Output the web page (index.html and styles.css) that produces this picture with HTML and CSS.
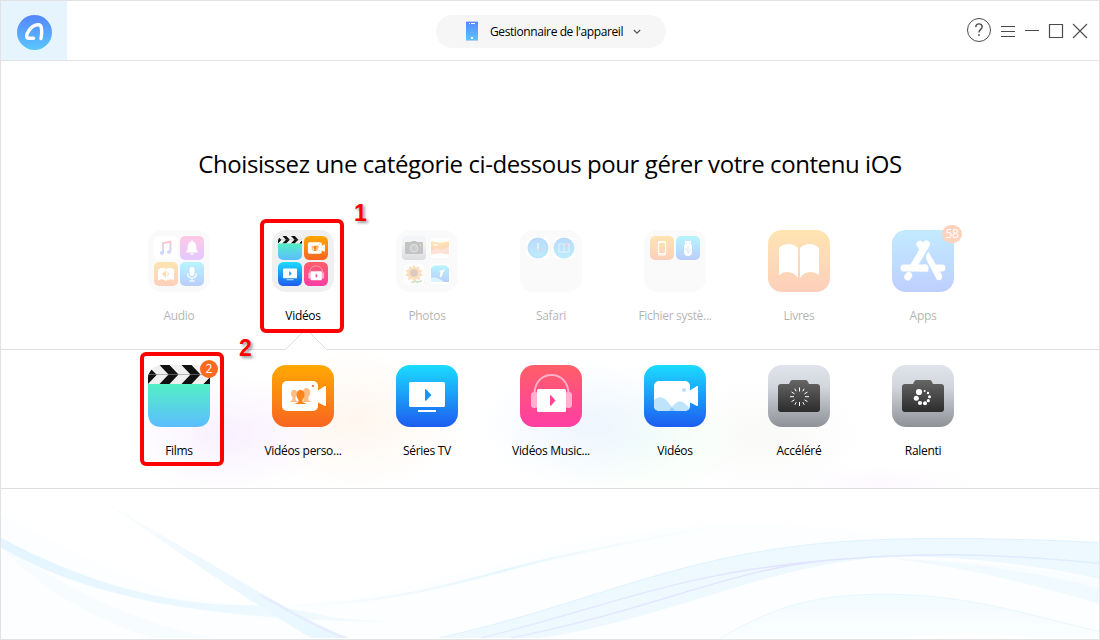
FILE: index.html
```html
<!DOCTYPE html>
<html lang="fr">
<head>
<meta charset="utf-8">
<title>Gestionnaire de l'appareil</title>
<link rel="stylesheet" href="styles.css">
</head>
<body>
<svg class="sprite" aria-hidden="true">
  <defs>
    <linearGradient id="g-orange" x1="0" y1="0" x2="0" y2="1"><stop offset="0" stop-color="#ffa903"/><stop offset="1" stop-color="#f96421"/></linearGradient>
    <linearGradient id="g-blue" x1="0" y1="0" x2="0" y2="1"><stop offset="0" stop-color="#1bdcff"/><stop offset="1" stop-color="#1d5cf0"/></linearGradient>
    <linearGradient id="g-pink" x1="0" y1="0" x2="0" y2="1"><stop offset="0" stop-color="#ff5f67"/><stop offset="1" stop-color="#fe3ea5"/></linearGradient>
    <linearGradient id="g-film" x1="0" y1="0" x2="0" y2="1"><stop offset="0" stop-color="#53efc4"/><stop offset="1" stop-color="#5cbdff"/></linearGradient>
    <linearGradient id="g-gray" x1="0" y1="0" x2="0" y2="1"><stop offset="0" stop-color="#dfe3eb"/><stop offset="0.35" stop-color="#d3d7dd"/><stop offset="1" stop-color="#8e9196"/></linearGradient>
    <linearGradient id="g-dark" x1="0" y1="0" x2="0" y2="1"><stop offset="0" stop-color="#666"/><stop offset="1" stop-color="#2c2c2c"/></linearGradient>
    <linearGradient id="g-bell" x1="0" y1="0" x2="0" y2="1"><stop offset="0" stop-color="#ff4fae"/><stop offset="1" stop-color="#a54cff"/></linearGradient>
    <linearGradient id="g-apps" x1="0" y1="0" x2="0" y2="1"><stop offset="0" stop-color="#38bdff"/><stop offset="1" stop-color="#2b62ff"/></linearGradient>
    <linearGradient id="g-note" x1="0" y1="0" x2="0" y2="1"><stop offset="0" stop-color="#ff3b5c"/><stop offset="1" stop-color="#3f7dff"/></linearGradient>
    <linearGradient id="g-logo" x1="0" y1="0" x2="0" y2="1"><stop offset="0" stop-color="#5585ff"/><stop offset="1" stop-color="#5bc6ff"/></linearGradient>
    <linearGradient id="g-compass" x1="0" y1="0" x2="0" y2="1"><stop offset="0" stop-color="#2586ee"/><stop offset="1" stop-color="#27c4f5"/></linearGradient>
    <clipPath id="c-tile"><rect width="62" height="62" rx="14"/></clipPath>
    <clipPath id="c-video"><rect x="10" y="16" width="36" height="30" rx="5"/></clipPath>
  </defs>

  <symbol id="i-film" viewBox="0 0 62 62"><path fill="url(#g-film)" d="M0 19h62v29q0 14-14 14H14Q0 62 0 48z"/><g clip-path="url(#c-tile)">
    <path fill="#f0f0f0" d="M0 0h62v19H0z"/>
    <path fill="#111" d="M-11 0H-1L8.500 9.500L-1 19H-11L-2 9.500zM11.500 0h10l9 9.500l-9 9.500h-10l9-9.500zM33.500 0h10l9 9.500l-9 9.500h-10l9-9.500zM55.500 0h10v19h-10l9-9.500z"/>
    <path fill="#111" d="M0 10v9l9-9.500zM62 13v6h-6z"/>
    <path stroke="#888" stroke-width=".6" d="M0 9.500h62"/></g></symbol>

  <symbol id="i-perso" viewBox="0 0 62 62"><rect width="62" height="62" rx="14" fill="url(#g-orange)"/>
    <rect x="10" y="16" width="36" height="30" rx="5" fill="#fff"/><path fill="#fff" d="M45 26l8-5h1v20h-1l-8-4z"/>
    <circle cx="41" cy="21" r="1.100" fill="#f4603c"/>
    <g fill="#ffbd83"><ellipse cx="22" cy="28.500" rx="3" ry="3.800"/><path d="M20.500 30h3v5l3 2h-9l3-2z"/><ellipse cx="34.500" cy="27.500" rx="3.600" ry="4.500"/><path d="M32.500 30h4v5.500l3.500 1.500H31z"/></g>
    <ellipse cx="28.500" cy="30" rx="4" ry="5.200" fill="#fb851b"/><path fill="#fb851b" d="M26.500 33h4v4l4 2H22.500l4-2z"/></symbol>

  <symbol id="i-tv" viewBox="0 0 62 62"><rect width="62" height="62" rx="14" fill="url(#g-blue)"/>
    <rect x="13" y="17" width="36" height="25" rx="1.500" fill="#fff"/><path fill="#1d93f7" d="M29 24.500l1-.3 5.500 5.800-5.500 5.800-1-.3z"/><path fill="#fff" d="M22 45h18v2H22z"/></symbol>

  <symbol id="i-music" viewBox="0 0 62 62"><rect width="62" height="62" rx="14" fill="url(#g-pink)"/>
    <path d="M14.500 28C15 17 22 10 31.500 10S48 17 48.500 28" fill="none" stroke="#ffb1c8" stroke-width="2"/>
    <rect x="11" y="27" width="7" height="16" rx="3" fill="#ffb1cf"/><rect x="45" y="27" width="7" height="16" rx="3" fill="#ffb1cf"/>
    <rect x="17" y="24" width="29" height="23" rx="1.500" fill="#fff"/><path fill="#fe4894" d="M30 30.500l1-.2 4.500 5.200-4.500 5.200-1-.2z"/></symbol>

  <symbol id="i-video" viewBox="0 0 62 62"><rect width="62" height="62" rx="14" fill="url(#g-blue)"/>
    <rect x="10" y="16" width="36" height="30" rx="5" fill="#fff"/><path fill="#fff" d="M45 26l8-5h1v20h-1l-8-4z"/>
    <circle cx="40" cy="25" r="2" fill="#b9e0fb"/>
    <g clip-path="url(#c-video)"><path fill="#bde4fb" d="M8 37C14 31 18 31 23 36l5 6c5-6 9-7 13-3l6 5v5H8z"/><path fill="#91cff8" d="M25 46l3-4 3 4z"/></g></symbol>

  <symbol id="i-accel" viewBox="0 0 62 62"><rect width="62" height="62" rx="14" fill="url(#g-gray)"/>
    <path fill="url(#g-dark)" d="M13 19h8l1.500-3q.5-1 2-1h13q1.500 0 2 1L41 19h8q3 0 3 3v22q0 3-3 3H13q-3 0-3-3V22q0-3 3-3z"/>
    <g stroke="#fff" stroke-width="1"><path d="M31.500 22.500v4M31.500 37v4M22 31.700h4M37 31.700h4M23.500 27l3 1.800M36.500 34.800l3 1.800M26.800 23.700l1.400 2.600M34.800 37.200l1.400 2.600M23.500 36.600l3-1.800M36.500 28.800l3-1.800M26.800 39.800l1.400-2.600M34.800 26.300l1.400-2.600"/></g></symbol>

  <symbol id="i-slow" viewBox="0 0 62 62"><rect width="62" height="62" rx="14" fill="url(#g-gray)"/>
    <path fill="url(#g-dark)" d="M13 19h8l1.500-3q.5-1 2-1h13q1.500 0 2 1L41 19h8q3 0 3 3v22q0 3-3 3H13q-3 0-3-3V22q0-3 3-3z"/>
    <g fill="#fff"><circle cx="27" cy="27" r="3.100"/><circle cx="32.700" cy="26" r="1"/><circle cx="36" cy="28" r="1.200"/><circle cx="37.500" cy="31.700" r="1.500"/><circle cx="36.300" cy="35.700" r="1.600"/><circle cx="33" cy="38.200" r="2"/><circle cx="28" cy="38" r="2.100"/><circle cx="24.300" cy="33.300" r="2.500"/></g></symbol>

  <symbol id="i-books" viewBox="0 0 62 62"><rect width="62" height="62" rx="14" fill="url(#g-orange)"/>
    <path fill="#fff" d="M11 18c5-5.500 14-5.500 19 0v30c-4-7-13-8-19-3zM32 18c5-5.500 14-5.500 19 0v27c-6-5-15-4-19 3z"/></symbol>

  <symbol id="i-apps" viewBox="0 0 62 62"><rect width="62" height="62" rx="14" fill="url(#g-apps)"/>
    <g fill="none" stroke="#fff" stroke-linecap="round" stroke-width="7"><path d="M28 14.200l3 4.500M34.500 14L20.500 38M12 38h21M45 38h5M15.700 47l1-1.500"/></g>
    <path fill="#fff" d="M31 34.500h4l1.500 7H28z"/>
    <path fill="#fff" d="M34 28q0-5 2.500-6L50 45q1 4-2 5t-4-2L35 31z"/></symbol>

  <symbol id="i-note" viewBox="0 0 24 24"><rect width="24" height="24" rx="5" fill="#fff"/><path fill="none" stroke="url(#g-note)" stroke-width="1.800" d="M9 17V7l7.500-1.500v10"/><ellipse cx="7.800" cy="17" rx="2" ry="1.700" fill="#4e7bff"/><ellipse cx="15" cy="16" rx="2" ry="1.700" fill="#557bff"/></symbol>
  <symbol id="i-bell" viewBox="0 0 24 24"><rect width="24" height="24" rx="5" fill="url(#g-bell)"/><path fill="#fff" d="M12 4.500c.8 0 1.200.6 1.200 1.200 2.500.8 3 2.800 3 5.300 0 3 .5 3.800 2 4.800v.7H5.800v-.7c1.500-1 2-1.800 2-4.800 0-2.500.5-4.500 3-5.300 0-.6.400-1.200 1.200-1.200zM10.300 17.300h3.400q-.4 1.700-1.700 1.700t-1.700-1.700z"/></symbol>
  <symbol id="i-audiobook" viewBox="0 0 24 24"><rect width="24" height="24" rx="5" fill="url(#g-orange)"/><path fill="#fff" d="M4 7.500q4-3 8-.5 4-2.500 8 .5v11q-4-2.500-8 .5-4-3-8-.5z"/><path fill="#fb8a16" d="M8.500 10.500h1.200L12 8v8l-2.300-2.500H8.500z"/><path stroke="#fb8a16" fill="none" d="M13.500 9.500q2 2.500 0 5"/></symbol>
  <symbol id="i-mic" viewBox="0 0 24 24"><rect width="24" height="24" rx="5" fill="url(#g-blue)"/><rect x="9.500" y="5" width="5" height="9" rx="2.500" fill="#fff"/><path fill="none" stroke="#fff" stroke-width="1.200" d="M7.500 11.500c0 6 9 6 9 0M12 16v3M9 19h6"/></symbol>

  <symbol id="i-camera" viewBox="0 0 24 24"><rect width="24" height="24" rx="4" fill="url(#g-gray)"/><path fill="#3d3d3d" d="M4 6h5l1-1h4l1 1h5q1 0 1 1v10q0 1-1 1H4q-1 0-1-1V7q0-1 1-1z"/><circle cx="12" cy="12.300" r="3.700" fill="#555" stroke="#aaa"/><circle cx="18.500" cy="9" r=".7" fill="#ffb93b"/></symbol>
  <symbol id="i-pano" viewBox="0 0 24 24"><rect x="1" y="1" width="22" height="22" rx="5" fill="#fff" stroke="#e8e8e8"/><path fill="url(#g-orange)" d="M3 5q9 3 18 0v13.500q-9-3-18 0z"/><path d="M5 8l2.500 1.500L10 8" stroke="#fff" fill="none" stroke-width="1.200"/><path fill="#f6a37c" d="M3 15q5-4 8-2t10-3v8.500q-9-3-18 0z"/></symbol>
  <symbol id="i-flower" viewBox="0 0 24 24"><rect x="1" y="1" width="22" height="22" rx="5" fill="#fff" stroke="#e8e8e8"/><path stroke="#4d9d3c" stroke-width="1.500" fill="none" d="M12 14q0 5 4 7M9 20q4 1 4-2M15 20l5-1"/><path fill="#f4992c" d="M12 2.500l1.800 3.300L17 4l.1 3.800 3.600.2-2 3.100 2.500 2.700-3.600.7.400 3.800-3.500-1.500L12 20l-2.300-3.200-3.600 1.500.4-3.800-3.600-.8 2.500-2.600-2-3.100 3.600-.2L7 4l3.300 1.800z"/><circle cx="12" cy="11" r="3.800" fill="#8a5331"/></symbol>
  <symbol id="i-photo" viewBox="0 0 24 24"><rect x="1" y="1" width="22" height="22" rx="5" fill="#fff" stroke="#e8e8e8"/><path fill="url(#g-blue)" d="M3 6l3-2.500h12L21 6v14H3z"/><path fill="#fff" d="M15 8l2-1.500-1 3c-2 1-1 4-3 6l-1.500-1c1-2 .5-3 1-5l-2-.5z"/><path d="M3 16q6-2 13 4H3z" fill="#89dcff"/></symbol>

  <symbol id="i-compass" viewBox="0 0 24 24"><rect x="1" y="1" width="22" height="22" rx="5" fill="#fff"/><circle cx="12" cy="12" r="10.500" fill="url(#g-compass)"/><circle cx="12" cy="12" r="9" fill="none" stroke="#1666bd" stroke-width=".7" stroke-dasharray=".7 1"/><path stroke="#fff" d="M12 7v6.500"/><path stroke="#ff4e3c" d="M12 13h3.500"/></symbol>
  <symbol id="i-bookmark" viewBox="0 0 24 24"><rect x="1" y="1" width="22" height="22" rx="5" fill="#fff"/><circle cx="12" cy="12" r="10.500" fill="url(#g-compass)"/><path fill="none" stroke="#fff" stroke-width=".7" stroke-opacity=".8" d="M7 8h4l1 1 1-1h4v8h-4l-1 .5-1-.5H7zM12 9v7"/><circle cx="15" cy="9" r="1.300" fill="#ff4e3c"/></symbol>
  <symbol id="i-phone" viewBox="0 0 24 24"><rect width="24" height="24" rx="5" fill="url(#g-orange)"/><rect x="8.500" y="5.500" width="7" height="13.500" rx="1.300" fill="none" stroke="#fff" stroke-width="1.200"/><path stroke="#fff" stroke-width="1.500" d="M8.500 6.300h7M8.500 17.800h7"/></symbol>
  <symbol id="i-usb" viewBox="0 0 24 24"><rect width="24" height="24" rx="5" fill="url(#g-blue)"/><path fill="#fff" d="M9 5h6v4h1v7q0 4-4 4t-4-4V9h1z"/><path stroke="#5ab4fa" fill="none" stroke-width=".8" d="M10 7h1M13 7h1M12 10v8M12 15l-2-1.500v-1.500M12 16.500l2-1.500v-2"/></symbol>
</svg>

<div class="window">
  <header class="bar">
    <div class="brand">
      <svg class="logo" viewBox="0 0 36 36"><circle cx="18.500" cy="18.500" r="17.500" fill="url(#g-logo)"/><path fill="none" stroke="#fff" stroke-width="3.400" stroke-linecap="round" stroke-linejoin="round" d="M17.500 24.300H12.500C9.500 24 10.500 20 13 16.500 16 12 19.500 10.200 23.500 10.800c2.500.7 2.700 8 1.500 13.700"/></svg>
    </div>
    <div class="device">
      <svg class="device-icon" viewBox="0 0 12 20"><rect width="12" height="20" rx="1" fill="url(#g-logo)"/><path fill="#fff" d="M5 2h4v1H5zM3 2h1v1H3zM5 16h2v2H5z"/><path stroke="#b6cdf5" d="M0 .5h12M0 19.500h12"/></svg>
      <span class="device-name">Gestionnaire de l'appareil</span>
      <svg class="chevron" viewBox="0 0 8 6"><path fill="none" stroke="#555" stroke-width="1.200" d="M.8 1L4 4.200 7.200 1"/></svg>
    </div>
    <div class="controls">
      <svg class="help" viewBox="0 0 26 26"><circle cx="13" cy="13" r="11.500" fill="none" stroke="#4a4a4a"/><path fill="none" stroke="#4a4a4a" stroke-width="1.400" d="M9.800 10.200C9.800 5.800 16.200 6 16.200 9.800c0 2.600-3.200 2.600-3.200 5.700M13 17.200v1.800"/></svg>
      <svg class="ctl" viewBox="0 0 16 16"><path stroke="#4a4a4a" d="M1 3.500h14M1 8.500h14M1 13.500h14"/></svg>
      <svg class="ctl" viewBox="0 0 16 16"><path stroke="#4a4a4a" d="M1 7.500h14"/></svg>
      <svg class="ctl" viewBox="0 0 16 16"><path fill="none" stroke="#4a4a4a" stroke-width="1.200" d="M1.500 1.500h13v13h-13z"/></svg>
      <svg class="ctl" viewBox="0 0 16 16"><path stroke="#4a4a4a" stroke-width="1.100" d="M1 1l14 14M15 1L1 15"/></svg>
    </div>
  </header>

  <main class="content">
    <h1 class="title">Choisissez une catégorie ci-dessous pour gérer votre contenu iOS</h1>
    <div class="row categories">
      <div class="item dim"><div class="folder"><svg><use href="#i-note"/></svg><svg><use href="#i-bell"/></svg><svg><use href="#i-audiobook"/></svg><svg><use href="#i-mic"/></svg></div><span class="label">Audio</span></div>
      <div class="item"><div class="folder"><svg><use href="#i-film"/></svg><svg><use href="#i-perso"/></svg><svg><use href="#i-tv"/></svg><svg><use href="#i-music"/></svg></div><span class="label">Vidéos</span><span class="mark"></span><span class="step step-one">1</span></div>
      <div class="item dim"><div class="folder"><svg><use href="#i-camera"/></svg><svg><use href="#i-pano"/></svg><svg><use href="#i-flower"/></svg><svg><use href="#i-photo"/></svg></div><span class="label">Photos</span></div>
      <div class="item dim"><div class="folder"><svg><use href="#i-compass"/></svg><svg><use href="#i-bookmark"/></svg></div><span class="label">Safari</span></div>
      <div class="item dim"><div class="folder"><svg><use href="#i-phone"/></svg><svg><use href="#i-usb"/></svg></div><span class="label">Fichier systè...</span></div>
      <div class="item dim"><svg class="tile"><use href="#i-books"/></svg><span class="label">Livres</span></div>
      <div class="item dim"><svg class="tile"><use href="#i-apps"/></svg><span class="label">Apps</span><span class="badge badge-wide">58</span></div>
    </div>
    <section class="panel">
      <svg class="pointer" viewBox="0 0 42 21"><path fill="#fff" d="M0 21L19 2q2-2 4 0l19 19z"/><path fill="none" stroke="#dedede" d="M.5 20.500L19 2q2-2 4 0l18.500 18.500"/></svg>
      <div class="row">
        <div class="item"><svg class="tile"><use href="#i-film"/></svg><span class="label">Films</span><span class="badge">2</span><span class="mark"></span><span class="step step-two">2</span></div>
        <div class="item"><svg class="tile"><use href="#i-perso"/></svg><span class="label">Vidéos perso...</span></div>
        <div class="item"><svg class="tile"><use href="#i-tv"/></svg><span class="label">Séries TV</span></div>
        <div class="item"><svg class="tile"><use href="#i-music"/></svg><span class="label">Vidéos Music...</span></div>
        <div class="item"><svg class="tile"><use href="#i-video"/></svg><span class="label">Vidéos</span></div>
        <div class="item"><svg class="tile"><use href="#i-accel"/></svg><span class="label">Accéléré</span></div>
        <div class="item"><svg class="tile"><use href="#i-slow"/></svg><span class="label">Ralenti</span></div>
      </div>
    </section>
    <svg class="waves" viewBox="0 0 1098 150" preserveAspectRatio="none">
      <defs>
        <linearGradient id="w-fade" x1="0" y1="0" x2="1" y2="1"><stop offset="0" stop-color="#eef8ff" stop-opacity="0"/><stop offset=".45" stop-color="#eef8ff"/><stop offset="1" stop-color="#e8f7ff"/></linearGradient>
        <linearGradient id="w-a"><stop offset="0" stop-color="#e4f5ff"/><stop offset="1" stop-color="#f3fbff"/></linearGradient>
        <linearGradient id="w-line" gradientUnits="userSpaceOnUse" x1="290" y1="0" x2="720" y2="0"><stop offset="0" stop-color="#e8f7ff" stop-opacity="0"/><stop offset=".5" stop-color="#e6f6ff"/><stop offset="1" stop-color="#f4fcff" stop-opacity="0"/></linearGradient>
        <linearGradient id="w-violet" gradientUnits="userSpaceOnUse" x1="480" y1="0" x2="1100" y2="0"><stop offset="0" stop-color="#e4ebff"/><stop offset=".5" stop-color="#e2e3ff"/><stop offset="1" stop-color="#dceeff"/></linearGradient>
        <linearGradient id="w-hill" x1="0" y1="0" x2="0" y2="1"><stop offset="0" stop-color="#f2fbff"/><stop offset="1" stop-color="#fbfeff"/></linearGradient>
      </defs>
      <path fill="#fcfeff" d="M0 25C80 70 170 117 260 117c170 0 280-82 490-82 60 0 130 10 170 16l180 10v89H0z"/>
      <path fill="#f7fdff" d="M0 59C60 90 100 125 210 150H150C90 130 40 100 0 59z"/>
      <path fill="url(#w-a)" d="M0 49C80 92 160 117 250 117c30 1 50 5 80 12 40 4 60 5 90 5C240 134 100 118 0 59z"/>
      <path fill="none" stroke="url(#w-line)" stroke-width="2.500" d="M290 118C420 113 480 85 560 68S680 43 720 37"/>
      <path fill="url(#w-fade)" d="M84 0C150 42 220 80 260 105c45 25 60 34 87 45h-37C240 108 180 65 84 0z"/>
      <path fill="none" stroke="#e8ecff" stroke-width="2.500" d="M260 107c30 17 55 32 87 44"/>
      <path fill="#eef9ff" d="M438 150C580 118 660 74 800 57c80-10 200-8 300-3v37c-60-14-120-21-190-23-130 0-230 60-370 82z"/>
      <path fill="none" stroke="#def2ff" d="M438 150C580 118 660 74 800 57c80-10 200-8 300-3"/>
      <path fill="#fafdff" d="M900 70c80 2 130 9 200 22v10c-70-16-120-28-200-32z"/>
      <path fill="none" stroke="url(#w-violet)" stroke-width="1.500" d="M480 150C620 115 680 82 850 70c80-6 150-5 250 5M510 150C660 120 740 75 850 70"/>
      <path fill="#f1faff" d="M890 70c80 3 140 13 210 30v16C1030 95 960 78 890 70z"/>
      <path fill="url(#w-hill)" d="M720 150c55-33 95-44 165-44 80 0 140 20 215 38v6z"/>
      <path fill="none" stroke="#e8f7ff" d="M720 150c55-33 95-44 165-44 80 0 140 20 215 38"/>
      <path fill="#fff" d="M900 150q80-9 130 0z"/>
    </svg>
  </main>
</div>
</body>
</html>
```
FILE: styles.css
```css
* { box-sizing: border-box; }
body { margin: 0; font-family: "Open Sans", "Noto Sans", sans-serif; color: #000; }
.sprite { position: absolute; width: 0; height: 0; }
.window { width: 1100px; height: 640px; display: flex; flex-direction: column; border: 1px solid #e2e2e2; background: #fff; overflow: hidden; }

.bar { display: grid; grid-template-columns: 435px 230px 1fr; height: 60px; flex: none; border-bottom: 1px solid #e2e2e2; }
.brand { width: 66px; height: 59px; background: #e6f4fe; padding: 13px 0 0 15px; }
.logo { display: block; width: 36px; height: 36px; }
.device { height: 33px; margin-top: 14px; padding-left: 30px; border-radius: 17px; background: #f6f6f6; display: flex; align-items: center; }
.device-icon { width: 12px; height: 20px; margin-right: 12px; margin-top: -1px; }
.device-name { width: 134px; font-size: 12px; letter-spacing: -0.4px; white-space: nowrap; }
.chevron { width: 8px; height: 6px; margin-left: 9px; margin-top: 1px; }
.controls { display: flex; justify-content: flex-end; align-items: flex-start; gap: 8px; padding: 22px 11px 0 0; }
.help { width: 26px; height: 26px; margin-top: -6px; }
.ctl { width: 16px; height: 16px; }

.content { flex: 1; display: flex; flex-direction: column; }
.title { margin: 0; padding-top: 83px; height: 169px; font-size: 24px; font-weight: 400; line-height: 40px; letter-spacing: -0.42px; text-align: center; white-space: nowrap; }
.row { display: grid; grid-template-columns: repeat(7, 124px); margin-left: 116px; }
.categories { height: 119px; z-index: 1; }
.item { position: relative; display: flex; flex-direction: column; align-items: center; }
.dim > * { opacity: .3; }
.tile { display: block; width: 62px; height: 62px; }
.folder { width: 62px; height: 62px; padding: 6px; border-radius: 14px; background: #f0f0f0; display: grid; grid-template-columns: 24px 24px; grid-auto-rows: 24px; gap: 2px; }
.folder svg { width: 24px; height: 24px; }
.label { margin-top: 15px; font-size: 12px; line-height: 18px; letter-spacing: -0.3px; white-space: nowrap; }
.badge { position: absolute; left: 83px; top: -5px; width: 18px; height: 18px; border-radius: 9px; background: #fa6b20; color: #fff; font-size: 12px; line-height: 18px; text-align: center; }
.badge-wide { left: 81px; width: 20px; letter-spacing: -0.3px; }
.dim > .badge { opacity: 1; background: #fed2bc; }
.mark { position: absolute; left: 18.5px; top: -11px; width: 84px; height: 114px; border: 4px solid #ff0000; border-radius: 6px; }
.panel .mark { left: 22.5px; top: -13px; }
.step { position: absolute; font: bold 23px/26px "Liberation Sans", sans-serif; color: #ff0000; text-shadow: 2px 2px 3px rgba(0, 0, 0, .4); }
.step-one { left: 113px; top: -30px; }
.step-two { left: 122px; top: -30px; }

.panel { position: relative; height: 140px; padding-top: 15px; border-top: 1px solid #dedede; border-bottom: 1px solid #dedede;
  background:
    radial-gradient(ellipse 100px 60px at 225px 85px, #f8f0ff, transparent),
    radial-gradient(ellipse 110px 70px at 355px 70px, #fff6ee, transparent),
    radial-gradient(ellipse 110px 65px at 590px 75px, #eef6ff, transparent),
    radial-gradient(ellipse 100px 60px at 645px 90px, #f4fff6, transparent),
    radial-gradient(ellipse 100px 60px at 765px 85px, #f9f9f8, transparent),
    radial-gradient(ellipse 100px 20px at 880px 135px, #fdf9ff, transparent),
    #fff; }
.pointer { position: absolute; left: 284px; top: -21px; width: 42px; height: 21px; }
.waves { display: block; width: 1098px; height: 149px; }
```
